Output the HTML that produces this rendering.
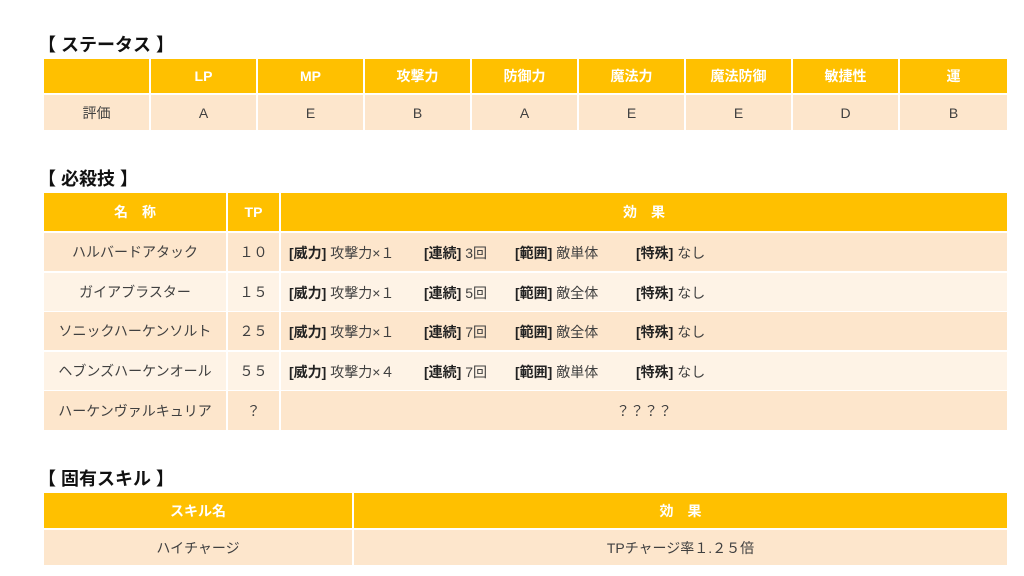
<!DOCTYPE html><html><head><meta charset="utf-8"><style>
body{margin:0;width:1024px;height:576px;background:#fff;position:relative;font-family:"Liberation Sans","Noto Sans CJK JP",sans-serif;color:#404040;overflow:hidden}
.t{position:absolute;font-size:18px;font-weight:bold;color:#111}
.c{position:absolute;display:flex;align-items:center;justify-content:center;font-size:14px;box-sizing:border-box}
.h{background:#FFC000;color:#fff;font-weight:bold}
.a{background:#FDE6CC}.b{background:#FEF3E6}
.e{position:absolute;font-size:14px;white-space:nowrap}
.e b{color:#222}
</style></head><body>
<div class="t" style="left:38px;top:31px">【 ステータス 】</div>
<div class="t" style="left:38px;top:165px">【 必殺技 】</div>
<div class="t" style="left:38px;top:465px">【 固有スキル 】</div>
<div id="r"></div>
<script>
var H='';function c(x,y,w,h,cls,t){H+='<div class="c '+cls+'" style="left:'+x+'px;top:'+y+'px;width:'+w+'px;height:'+h+'px">'+t+'</div>';}
var xs=[44,151,258,365,472,579,686,793,900,1007];
var hd=['','LP','MP','攻撃力','防御力','魔法力','魔法防御','敏捷性','運'];
var vd=['評価','A','E','B','A','E','E','D','B'];
for(var i=0;i<9;i++){var w=xs[i+1]-xs[i]-(i<8?2:0);c(xs[i],59,w,34,'h',hd[i]);c(xs[i],95,w,35,'a',vd[i]);}
c(44,193,182,38,'h','名　称');c(228,193,51,38,'h','TP');c(281,193,726,38,'h','効　果');
var rows=[[233,38,'a','ハルバードアタック','１０'],[273,38,'b','ガイアブラスター','１５'],[312,38,'a','ソニックハーケンソルト','２５'],[352,38,'b','ヘブンズハーケンオール','５５'],[391,39,'a','ハーケンヴァルキュリア','？']];
var eff=[['×１','3回','敵単体'],['×１','5回','敵全体'],['×１','7回','敵全体'],['×４','7回','敵単体']];
rows.forEach(function(r,i){c(44,r[0],182,r[1],r[2],r[3]);c(228,r[0],51,r[1],r[2],r[4]);c(281,r[0],726,r[1],r[2],i==4?'？？？？':'');
if(i<4){var y=r[0]+10;var e=eff[i];
H+='<div class="e" style="left:289px;top:'+y+'px"><b>[威力]</b> 攻撃力'+e[0]+'</div>';
H+='<div class="e" style="left:424px;top:'+y+'px"><b>[連続]</b> '+e[1]+'</div>';
H+='<div class="e" style="left:515px;top:'+y+'px"><b>[範囲]</b> '+e[2]+'</div>';
H+='<div class="e" style="left:636px;top:'+y+'px"><b>[特殊]</b> なし</div>';}});
c(44,493,308,35,'h','スキル名');c(354,493,653,35,'h','効　果');
c(44,530,308,35,'a','ハイチャージ');c(354,530,653,35,'a','TPチャージ率１.２５倍');
document.getElementById('r').innerHTML=H;
</script>
</body></html>
